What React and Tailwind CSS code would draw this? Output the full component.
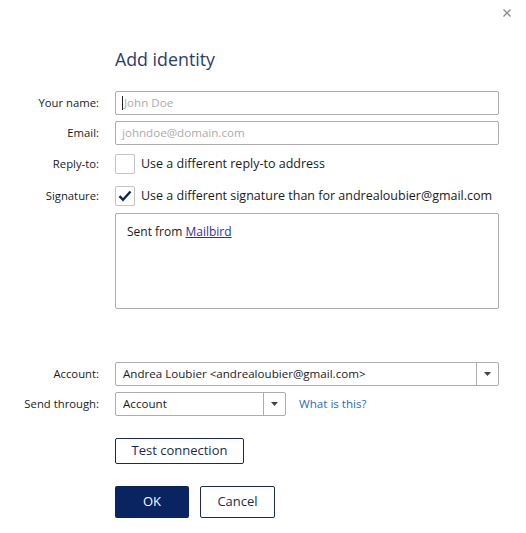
import React from 'react';

const font = { fontFamily: '"Open Sans", "Noto Sans", sans-serif' };

function Label({ children }) {
  return (
    <span className="w-[100px] shrink-0 pr-[1px] text-right text-[11.3px] text-[#1a1a1a]">
      {children}
    </span>
  );
}

function Checkbox({ checked }) {
  return (
    <span className="flex h-[20px] w-[20px] shrink-0 items-center justify-center rounded-[2px] border border-[#c4c4c4] bg-white">
      {checked && (
        <svg width="14" height="12" viewBox="0 0 14 12">
          <path d="M1.5 6.2 L5 9.8 L12.5 1.5" fill="none" stroke="#0d2460" strokeWidth="2.4" />
        </svg>
      )}
    </span>
  );
}

function Select({ value, width }) {
  return (
    <div className={`flex ${width} h-[24px] items-stretch rounded-[2px] border border-[#adadad] bg-white`}>
      <span className="flex flex-1 items-center pl-[7px] text-[11.6px] text-[#1a1a1a]">{value}</span>
      <span className="flex w-[22px] items-center justify-center border-l border-[#adadad]">
        <svg width="7" height="4" viewBox="0 0 7 4">
          <path d="M0 0 H7 L3.5 4 Z" fill="#444" />
        </svg>
      </span>
    </div>
  );
}

export default function App() {
  return (
    <div className="relative h-[533px] w-[526px] bg-white" style={font}>
      {/* close */}
      <div className="flex justify-end pr-[15px] pt-[9px]">
        <svg width="8" height="8" viewBox="0 0 8 8">
          <path d="M0.5 0.5 L7.5 7.5 M7.5 0.5 L0.5 7.5" stroke="#8a8a8a" strokeWidth="1.3" />
        </svg>
      </div>

      <div className="flex flex-col">
        <h1 className="ml-[115px] mt-[28px] text-[17.8px] leading-[28px] font-normal text-[#2c3b6e]">
          Add identity
        </h1>

        <div className="mt-[18px] flex items-center gap-[15px]">
          <Label>Your name:</Label>
          <div className="flex h-[24px] w-[384px] items-center rounded-[2px] border border-[#adadad] pl-[6px] text-[11.6px] text-[#ababab]">
            <span className="mr-[1px] h-[14px] w-[1px] bg-[#222]" />
            John Doe
          </div>
        </div>

        <div className="mt-[6px] flex items-center gap-[15px]">
          <Label>Email:</Label>
          <div className="flex h-[24px] w-[384px] items-center rounded-[2px] border border-[#adadad] pl-[6px] text-[11.6px] text-[#ababab]">
            johndoe@domain.com
          </div>
        </div>

        <div className="mt-[9px] flex items-center gap-[15px]">
          <Label>Reply-to:</Label>
          <div className="flex items-center gap-[6px]">
            <Checkbox />
            <span className="text-[12.5px] text-[#1a1a1a]">Use a different reply-to address</span>
          </div>
        </div>

        <div className="mt-[12px] flex items-center gap-[15px]">
          <Label>Signature:</Label>
          <div className="flex items-center gap-[6px]">
            <Checkbox checked />
            <span className="text-[12.5px] text-[#1a1a1a]">
              Use a different signature than for andrealoubier@gmail.com
            </span>
          </div>
        </div>

        <div className="ml-[115px] mt-[7px] h-[96px] w-[384px] rounded-[2px] border border-[#adadad] px-[11px] pt-[9px] text-[12px] text-[#1a1a1a]">
          Sent from <span className="text-[#2f2f9f] underline">Mailbird</span>
        </div>

        <div className="mt-[53px] flex items-center gap-[15px]">
          <Label>Account:</Label>
          <Select value="Andrea Loubier <andrealoubier@gmail.com>" width="w-[384px]" />
        </div>

        <div className="mt-[6px] flex items-center gap-[15px]">
          <Label>Send through:</Label>
          <Select value="Account" width="w-[171px]" />
          <span className="-ml-[2px] text-[11.6px] text-[#2b6cc4]">What is this?</span>
        </div>

        <div className="ml-[115px] mt-[22px] flex">
          <button className="h-[26px] w-[129px] rounded-[2px] border border-[#1c2a4d] bg-white text-[13px] text-[#1c2a4d]">
            Test connection
          </button>
        </div>

        <div className="ml-[115px] mt-[22px] flex gap-[11px]">
          <button className="h-[32px] w-[74px] rounded-[2px] bg-[#0a2361] text-[13px] text-white">
            OK
          </button>
          <button className="h-[32px] w-[75px] rounded-[2px] border border-[#1c2a4d] bg-white text-[13px] text-[#1c2a4d]">
            Cancel
          </button>
        </div>
      </div>
    </div>
  );
}
